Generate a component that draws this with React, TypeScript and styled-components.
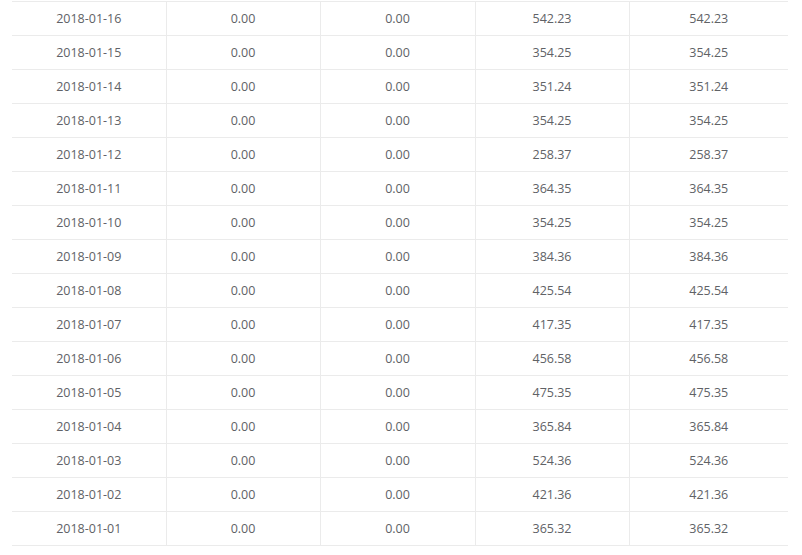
import React from "react";
import styled, { createGlobalStyle } from "styled-components";

interface Row {
  date: string;
  a: string;
  b: string;
  c: string;
  d: string;
}

const values = [
  ["2018-01-16", "542.23"],
  ["2018-01-15", "354.25"],
  ["2018-01-14", "351.24"],
  ["2018-01-13", "354.25"],
  ["2018-01-12", "258.37"],
  ["2018-01-11", "364.35"],
  ["2018-01-10", "354.25"],
  ["2018-01-09", "384.36"],
  ["2018-01-08", "425.54"],
  ["2018-01-07", "417.35"],
  ["2018-01-06", "456.58"],
  ["2018-01-05", "475.35"],
  ["2018-01-04", "365.84"],
  ["2018-01-03", "524.36"],
  ["2018-01-02", "421.36"],
  ["2018-01-01", "365.32"],
];

const rows: Row[] = values.map(([date, v]) => ({
  date,
  a: "0.00",
  b: "0.00",
  c: v,
  d: v,
}));

const GlobalStyle = createGlobalStyle`
  html, body {
    margin: 0;
    padding: 0;
    background: #ffffff;
  }
`;

const Page = styled.div`
  width: 802px;
  height: 555px;
  box-sizing: border-box;
  padding: 1px 14px 0 12px;
  overflow: hidden;
`;

const Table = styled.table`
  width: 776px;
  border-collapse: collapse;
  table-layout: fixed;
  border-top: 1px solid #ebebeb;
  font-family: "Open Sans", "Segoe UI", sans-serif;
  font-size: 12.5px;
  color: #606266;
`;

const Cell = styled.td<{ $last?: boolean }>`
  height: 33px;
  padding: 0;
  text-align: center;
  vertical-align: middle;
  border-bottom: 1px solid #ebebeb;
  border-right: ${(p) => (p.$last ? "none" : "1px solid #ebebeb")};
`;

const Col = styled.col<{ $w: number }>`
  width: ${(p) => p.$w}px;
`;

const App: React.FC = () => {
  return (
    <>
      <GlobalStyle />
      <Page>
        <Table>
          <colgroup>
            <Col $w={154} />
            <Col $w={154} />
            <Col $w={155} />
            <Col $w={154} />
            <Col $w={159} />
          </colgroup>
          <tbody>
            {rows.map((r) => (
              <tr key={r.date}>
                <Cell>{r.date}</Cell>
                <Cell>{r.a}</Cell>
                <Cell>{r.b}</Cell>
                <Cell>{r.c}</Cell>
                <Cell $last>{r.d}</Cell>
              </tr>
            ))}
          </tbody>
        </Table>
      </Page>
    </>
  );
};

export default App;
